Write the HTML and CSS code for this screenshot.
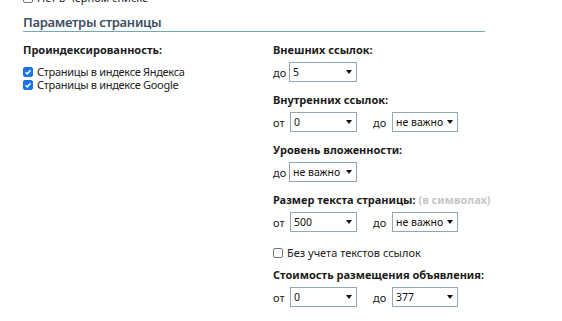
FILE: index.html
```html
<!DOCTYPE html>
<html lang="ru">
<head>
    <meta charset="UTF-8">
    <title>Параметры страницы</title>
    <link rel="stylesheet" href="styles.css">
</head>
<body>
    <div class="page">
        <label class="check top-check"><span class="box"></span>Нет в черном списке</label>

        <h2 class="section-title">Параметры страницы</h2>

        <div class="columns">
            <div class="col-left">
                <div class="label">Проиндексированность:</div>
                <label class="check tight"><span class="box checked"><svg viewBox="0 0 10 10"><path d="M2 5.2 L4.2 7.3 L8.2 2.8" /></svg></span>Страницы в индексе Яндекса</label>
                <label class="check tight"><span class="box checked"><svg viewBox="0 0 10 10"><path d="M2 5.2 L4.2 7.3 L8.2 2.8" /></svg></span>Страницы в индексе Google</label>
            </div>

            <div class="col-right">
                <div class="label">Внешних ссылок:</div>
                <div class="row">
                    <span class="pre">до</span>
                    <span class="select wide">5<i class="arrow"></i></span>
                </div>

                <div class="label">Внутренних ссылок:</div>
                <div class="row">
                    <span class="pre">от</span>
                    <span class="select">0<i class="arrow"></i></span>
                    <span class="pre mid">до</span>
                    <span class="select">не важно<i class="arrow"></i></span>
                </div>

                <div class="label">Уровень вложенности:</div>
                <div class="row">
                    <span class="pre">до</span>
                    <span class="select wide">не важно<i class="arrow"></i></span>
                </div>

                <div class="label">Размер текста страницы: <span class="hint">(в символах)</span></div>
                <div class="row">
                    <span class="pre">от</span>
                    <span class="select">500<i class="arrow"></i></span>
                    <span class="pre mid">до</span>
                    <span class="select">не важно<i class="arrow"></i></span>
                </div>

                <label class="check plain"><span class="box"></span>Без учета текстов ссылок</label>

                <div class="label">Стоимость размещения объявления:</div>
                <div class="row">
                    <span class="pre">от</span>
                    <span class="select">0<i class="arrow"></i></span>
                    <span class="pre mid">до</span>
                    <span class="select">377<i class="arrow"></i></span>
                </div>
            </div>
        </div>
    </div>
</body>
</html>
```

FILE: styles.css
```css
*{
    margin: 0;
    padding: 0;
    box-sizing: border-box;
}
body{
    font-family: "Noto Sans", "Open Sans", sans-serif;
    font-size: 11px;
    color: #222;
    background: #fff;
    overflow: hidden;
}
.page{
    padding-left: 23px;
    width: 485px;
}
.check{
    display: flex;
    align-items: center;
    height: 13px;
    line-height: 13px;
    white-space: nowrap;
}
.check.tight{
    letter-spacing: -0.3px;
}
.check .box{
    display: inline-block;
    flex: none;
    width: 10px;
    height: 10px;
    margin-right: 4px;
    border: 1px solid #767676;
    border-radius: 2px;
    background: #fff;
}
.check .box.checked{
    border-color: #1a73e8;
    background: #1a73e8;
}
.check .box svg{
    display: block;
    width: 8px;
    height: 8px;
}
.check .box svg path{
    fill: none;
    stroke: #fff;
    stroke-width: 1.8;
}
.top-check{
    margin-top: -9px;
}
.section-title{
    margin-top: 10px;
    font-size: 13px;
    font-weight: 600;
    letter-spacing: -0.3px;
    line-height: 17px;
    color: #3d5064;
    border-bottom: 1px solid #6fa8b9;
}
.columns{
    display: flex;
    margin-top: 10px;
}
.col-left{
    flex: none;
    width: 250px;
}
.col-right{
    flex: 1;
}
.label{
    font-weight: bold;
    line-height: 15px;
    color: #1b1b1b;
    white-space: nowrap;
}
.col-left .label{
    margin-bottom: 8px;
}
.hint{
    color: #c6c6c6;
}
.row{
    display: flex;
    align-items: center;
    margin: 5px 0 10px;
    height: 20px;
}
.pre{
    flex: none;
    width: 17px;
}
.mid{
    margin-left: 16px;
    width: 19px;
}
.select{
    position: relative;
    flex: none;
    width: 67px;
    height: 20px;
    padding-left: 3px;
    font-size: 10.5px;
    line-height: 18px;
    border: 1px solid #8fa8b2;
    color: #111;
    white-space: nowrap;
}
.mid + .select{
    width: 66px;
}
.select.wide{
    width: 68px;
    margin-left: -1px;
}
.arrow{
    position: absolute;
    right: 4px;
    top: 7px;
    width: 0;
    height: 0;
    border-left: 3.5px solid transparent;
    border-right: 3.5px solid transparent;
    border-top: 4px solid #111;
}
.plain{
    margin: 14px 0 8px;
}
```
